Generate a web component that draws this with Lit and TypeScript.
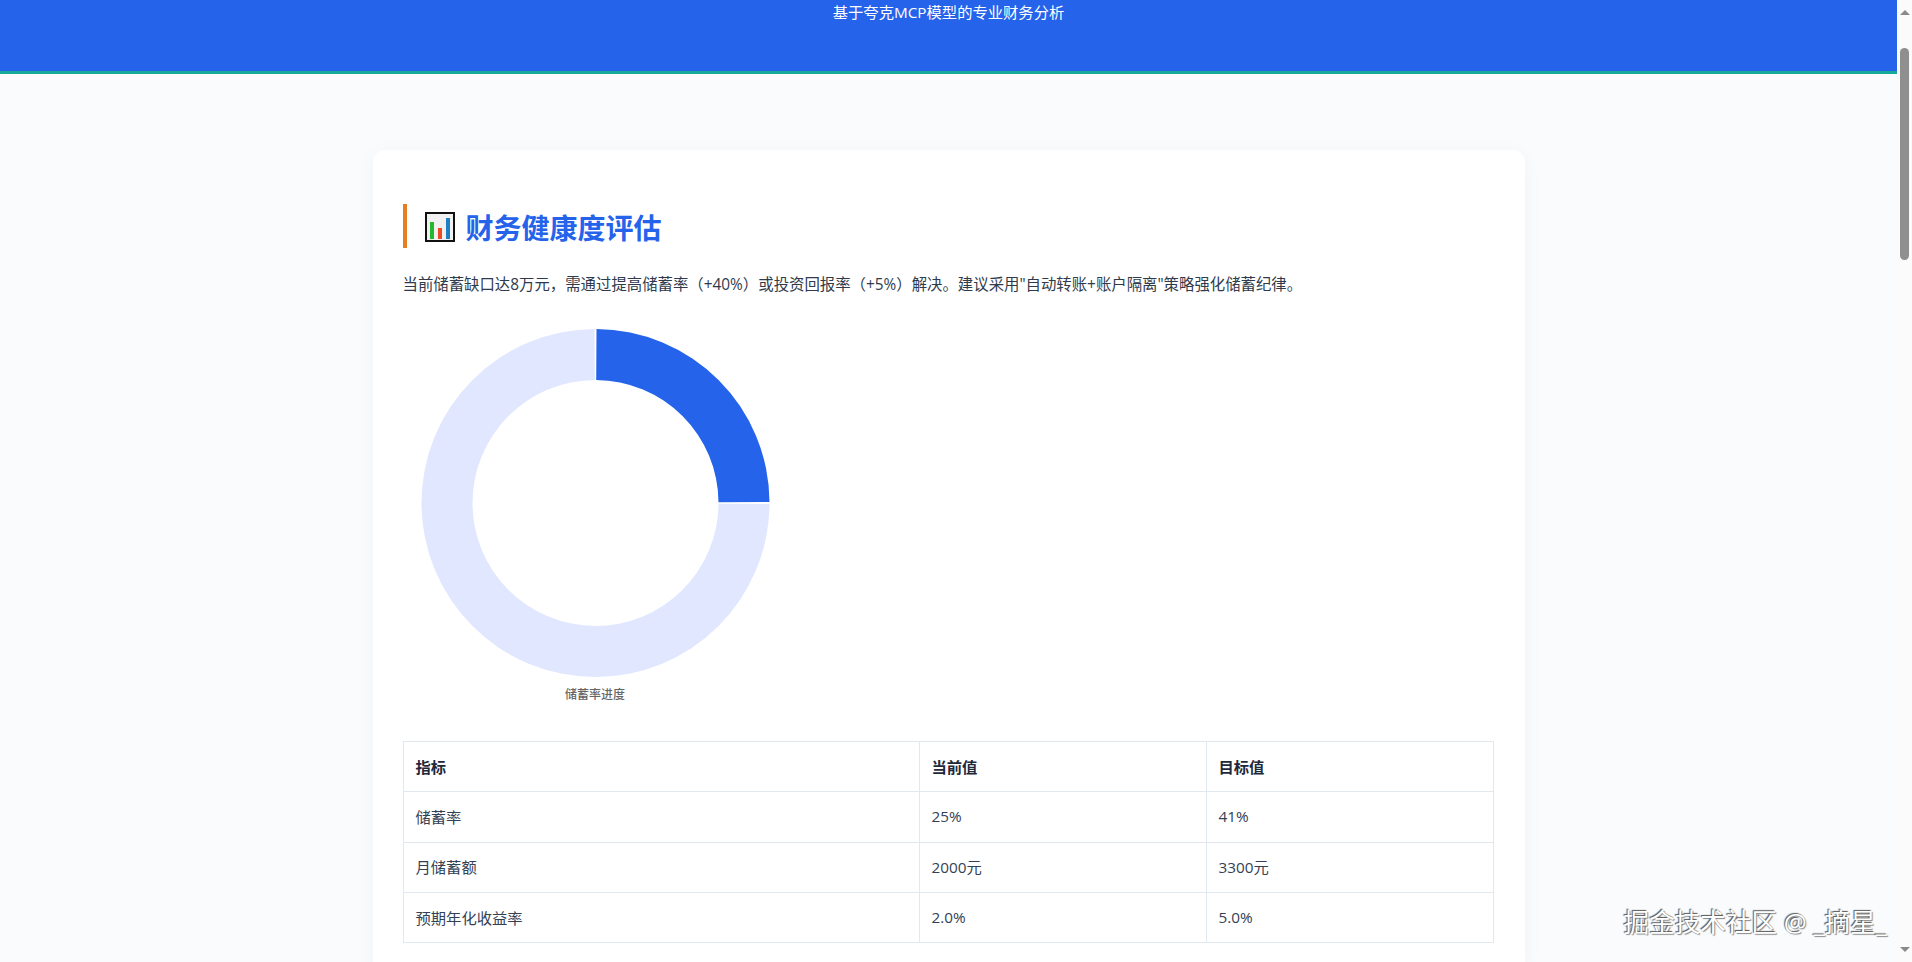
import { LitElement, html, css, svg } from "lit";
import { customElement } from "lit/decorators.js";

const rows = [
  ["储蓄率", "25%", "41%"],
  ["月储蓄额", "2000元", "3300元"],
  ["预期年化收益率", "2.0%", "5.0%"],
];

// Ring segment from angle a0 to a1 (degrees clockwise from 12 o'clock)
function seg(cx: number, cy: number, R: number, r: number, a0: number, a1: number) {
  const p = (rad: number, a: number) => {
    const t = (a * Math.PI) / 180;
    return `${(cx + rad * Math.sin(t)).toFixed(2)} ${(cy - rad * Math.cos(t)).toFixed(2)}`;
  };
  const large = a1 - a0 > 180 ? 1 : 0;
  return `M${p(R, a0)}A${R} ${R} 0 ${large} 1 ${p(R, a1)}L${p(r, a1)}A${r} ${r} 0 ${large} 0 ${p(r, a0)}Z`;
}

@customElement("app-root")
export class AppRoot extends LitElement {
  static styles = css`
    :host {
      display: flex;
      height: 962px;
      overflow: hidden;
      position: relative;
      background: #f9fbfd;
      color: #334155;
      font-family: "Open Sans", "Noto Sans CJK SC", sans-serif;
    }
    .page { flex: 1; min-width: 0; overflow: hidden; }
    header {
      height: 71px;
      background: #2563eb;
      border-bottom: 3px solid #14a99a;
      color: #fff;
      text-align: center;
      font-size: 15.3px;
      line-height: 25px;
    }
    .card {
      width: 1152px;
      box-sizing: border-box;
      margin: 76px auto 0;
      padding: 54px 30px 30px;
      background: #fff;
      border-radius: 12px;
      box-shadow: 0 4px 20px rgba(15, 23, 42, 0.04);
    }
    h2 {
      display: flex;
      align-items: center;
      gap: 10px;
      height: 44px;
      margin: 0 0 17px;
      padding-left: 17px;
      border-left: 4px solid #e67e22;
      color: #2563eb;
      font-size: 28px;
      line-height: 46px;
      font-weight: 700;
    }
    h2 svg { display: block; width: 32px; height: 32px; margin-top: 1px; }
    h2 span { margin-top: 4px; }
    p { margin: 0; font-size: 15.4px; line-height: 40px; height: 38px; color: #2f3b4c; }
    .chart { width: 385px; margin-top: 24px; }
    .chart svg { display: block; width: 385px; height: 352px; }
    .chart .cap {
      text-align: center;
      font-size: 12px;
      line-height: 18px;
      margin-top: 7px;
      color: #666;
      font-weight: 500;
    }
    table {
      width: calc(100% - 1px);
      margin-top: 37px;
      border-collapse: collapse;
      table-layout: fixed;
      font-size: 15.3px;
    }
    th, td {
      border: 1px solid #e2e8f0;
      padding: 0 12px 2px;
      height: 47.3px;
      text-align: left;
    }
    th { font-weight: 700; color: #1e293b; }
    .c1 { width: 491px; }
    .c2 { width: 262px; }
    .bar {
      width: 15px;
      flex: none;
      background: #fbfbfb;
      display: flex;
      flex-direction: column;
      align-items: center;
    }
    .up, .down { width: 0; height: 0; border-left: 5px solid transparent; border-right: 5px solid transparent; }
    .up { border-bottom: 5px solid #8a8a8a; margin-top: 10px; }
    .thumb { width: 9px; height: 212px; margin-top: 33px; border-radius: 5px; background: #8f8f8f; }
    .down { border-top: 5px solid #8a8a8a; margin-top: auto; margin-bottom: 10px; }
    .mark {
      position: absolute;
      right: 25px;
      top: 905px;
      font-size: 25.6px;
      line-height: 36px;
      color: #fff;
      text-shadow: -1px -1px 1px #555, 1px 1px 1px #888;
      white-space: nowrap;
    }
  `;

  render() {
    const gap = 0.33;
    return html`
      <div class="page">
        <header>基于夸克MCP模型的专业财务分析</header>
        <section class="card">
          <h2>
            <svg viewBox="0 0 32 32" aria-hidden="true">
              <rect x="2" y="2" width="28" height="28" fill="#f1f1f1" stroke="#111" stroke-width="2"/>
              <rect x="6" y="11" width="4" height="17" fill="#22b92e"/>
              <rect x="14" y="17" width="4" height="11" fill="#ef4a23"/>
              <rect x="22" y="7" width="4" height="21" fill="#1f7fc4"/>
            </svg>
            <span>财务健康度评估</span>
          </h2>
          <p>当前储蓄缺口达8万元，需通过提高储蓄率（+40%）或投资回报率（+5%）解决。建议采用"自动转账+账户隔离"策略强化储蓄纪律。</p>
          <div class="chart">
            <svg viewBox="0 0 385 352" aria-hidden="true">
              ${svg`<path d=${seg(192.5, 176, 174, 123, gap, 90 - gap)} fill="#2563eb"/>`}
              ${svg`<path d=${seg(192.5, 176, 174, 123, 90 + gap, 360 - gap)} fill="#e0e7ff"/>`}
            </svg>
            <div class="cap">储蓄率进度</div>
          </div>
          <table>
            <thead><tr><th class="c1">指标</th><th class="c2">当前值</th><th>目标值</th></tr></thead>
            <tbody>
              ${rows.map((r) => html`<tr>${r.map((c) => html`<td>${c}</td>`)}</tr>`)}
            </tbody>
          </table>
        </section>
      </div>
      <div class="bar"><div class="up"></div><div class="thumb"></div><div class="down"></div></div>
      <div class="mark">掘金技术社区 @ _摘星_</div>
    `;
  }
}
